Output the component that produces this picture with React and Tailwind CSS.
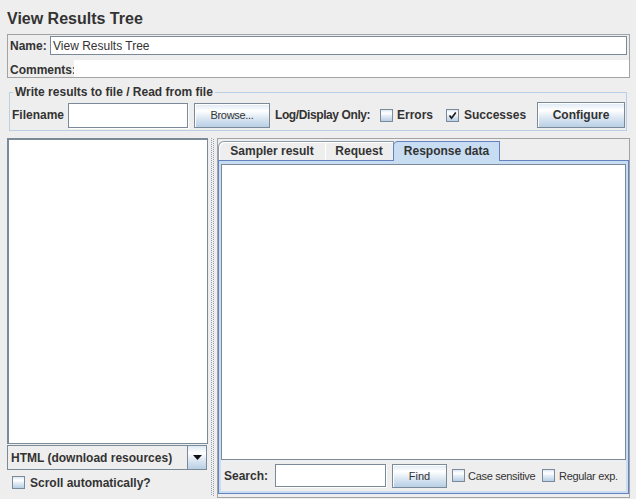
import React from "react";

const gloss = "bg-[linear-gradient(to_bottom,#dde8f3_0%,#ffffff_30%,#dde8f3_60%,#b8cfe5_100%)]";

function CheckBox({ checked = false, className = "" }) {
    return (
        <span className={`flex h-[13px] w-[13px] shrink-0 items-center justify-center border border-[#7a8a99] ${gloss} ${className}`}>
            {checked && (
                <svg width="9" height="9" viewBox="0 0 9 9">
                    <path d="M1.5 4.5 L3.5 7.2 L7.8 1.5" fill="none" stroke="#1a1a1a" strokeWidth="1.7" />
                </svg>
            )}
        </span>
    );
}

function Button({ children, className = "" }) {
    return (
        <div className={`flex shrink-0 items-center justify-center border border-[#7a8a99] ${gloss} shadow-[inset_1px_1px_0_#ffffff] ${className}`}>
            {children}
        </div>
    );
}

function Field({ className = "" }) {
    return <div className={`shrink-0 border border-[#7a8a99] bg-white shadow-[1px_1px_0_#ffffff] ${className}`} />;
}

export default function App() {
    return (
        <div className="h-[499px] w-[636px] overflow-hidden bg-[#eeeeee] font-['Liberation_Sans',Arial,sans-serif] text-[12px] leading-[14px] text-[#333333]">
            <div className="h-[34px] pl-[7px] pt-[9px] text-[16px] font-bold leading-[20px]">View Results Tree</div>

            {/* name / comments */}
            <div className="ml-[7px] h-[44px] w-[623px] border border-[#a3a3a3]">
                <div className="flex h-[21px] items-center">
                    <span className="w-[42px] pl-[2px] font-bold">Name:</span>
                    <div className="flex h-[19px] w-[577px] items-center border border-[#7a8a99] bg-white pl-[2px]">
                        View Results Tree
                    </div>
                </div>
                <div className="mt-[4px] flex h-[17px] items-center">
                    <span className="w-[66px] pl-[2px] pt-[2px] font-bold">Comments:</span>
                    <div className="h-[17px] flex-1 bg-white" />
                </div>
            </div>

            {/* file group */}
            <fieldset className="ml-[9px] mt-[7px] w-[618px] border border-[#b8cfe5]">
                <legend className="ml-[3px] px-[2px] font-bold leading-[14px]">Write results to file / Read from file</legend>
                <div className="pb-[2px] pt-[3px]">
                    <div className="flex h-[26px] items-center">
                        <span className="ml-[2px] w-[56px] font-bold">Filename</span>
                        <Field className="h-[25px] w-[120px]" />
                        <Button className="ml-[6px] h-[25px] w-[76px] text-[11px] tracking-[-0.3px]">Browse...</Button>
                        <span className="ml-[5px] w-[105px] whitespace-nowrap font-bold tracking-[-0.4px]">Log/Display Only:</span>
                        <CheckBox />
                        <span className="ml-[4px] w-[49px] font-bold">Errors</span>
                        <CheckBox checked />
                        <span className="ml-[5px] w-[73px] font-bold">Successes</span>
                        <Button className="h-[26px] w-[88px] font-bold">Configure</Button>
                    </div>
                </div>
            </fieldset>

            {/* split pane */}
            <div className="mt-[7px] flex h-[361px]">
                <div className="ml-[7px] flex w-[202px] flex-col">
                    <div className="h-[306px] w-[201px] border-b border-l-2 border-r border-t-2 border-[#7a8a99] bg-white" />
                    <div className="mt-[1px] flex h-[25px] w-[200px] border border-[#7a8a99] bg-[#eeeeee]">
                        <span className="flex flex-1 items-center pl-[3px] font-bold">HTML (download resources)</span>
                        <div className={`flex w-[19px] items-center justify-center border-l border-[#7a8a99] ${gloss}`}>
                            <svg width="9" height="5" viewBox="0 0 9 5">
                                <polygon points="0,0 9,0 4.5,5" fill="#111111" />
                            </svg>
                        </div>
                    </div>
                    <div className="flex h-[25px] items-center pl-[5px]">
                        <CheckBox />
                        <span className="ml-[5px] font-bold">Scroll automatically?</span>
                    </div>
                </div>

                {/* divider */}
                <div className="flex w-[8px] pl-[2px] pb-[4px]">
                    <div className="h-full w-[1px] border-l border-dotted border-[#95a3b1]" />
                    <div className="ml-[1px] mt-[1px] h-full w-[1px] border-l border-dotted border-[#95a3b1]" />
                </div>

                {/* tabbed pane */}
                <div className="flex h-[360px] w-[413px] flex-col border border-[#a3a3a3] pt-[2px]">
                    <div className="flex h-[19px] items-end">
                        <div className="flex h-[19px] w-[108px] items-center justify-center rounded-tl-[6px] border-l border-r border-t border-[#8e9ba8] bg-[#eeeeee] font-bold shadow-[inset_1px_1px_0_#ffffff]">
                            Sampler result
                        </div>
                        <div className="-ml-px flex h-[19px] w-[69px] items-center justify-center border-r border-t border-[#8e9ba8] bg-[#eeeeee] font-bold shadow-[inset_1px_1px_0_#ffffff]">
                            Request
                        </div>
                        <div className="relative z-10 -mb-px -ml-px flex h-[20px] w-[107px] items-center justify-center rounded-tl-[5px] border-l border-r border-t border-[#6382bf] bg-[#c8ddf2] pb-[1px] font-bold">
                            Response data
                        </div>
                    </div>
                    <div className="mb-[3px] flex flex-1 flex-col border border-[#6382bf] bg-[#c8ddf2] px-[2px] pb-[2px] pt-[3px]">
                        <div className="flex flex-1 flex-col bg-[#eeeeee]">
                            <div className="h-[296px] border border-[#7a8a99] bg-white" />
                            <div className="flex flex-1 items-center pl-[3px]">
                                <span className="w-[51px] font-bold">Search:</span>
                                <Field className="h-[23px] w-[111px]" />
                                <Button className="ml-[6px] h-[24px] w-[55px] text-[11px]">Find</Button>
                                <CheckBox className="ml-[5px]" />
                                <span className="ml-[3px] w-[74px] whitespace-nowrap text-[11px] tracking-[-0.3px]">Case sensitive</span>
                                <CheckBox />
                                <span className="ml-[4px] whitespace-nowrap text-[11px] tracking-[-0.3px]">Regular exp.</span>
                            </div>
                        </div>
                    </div>
                </div>
            </div>
        </div>
    );
}
